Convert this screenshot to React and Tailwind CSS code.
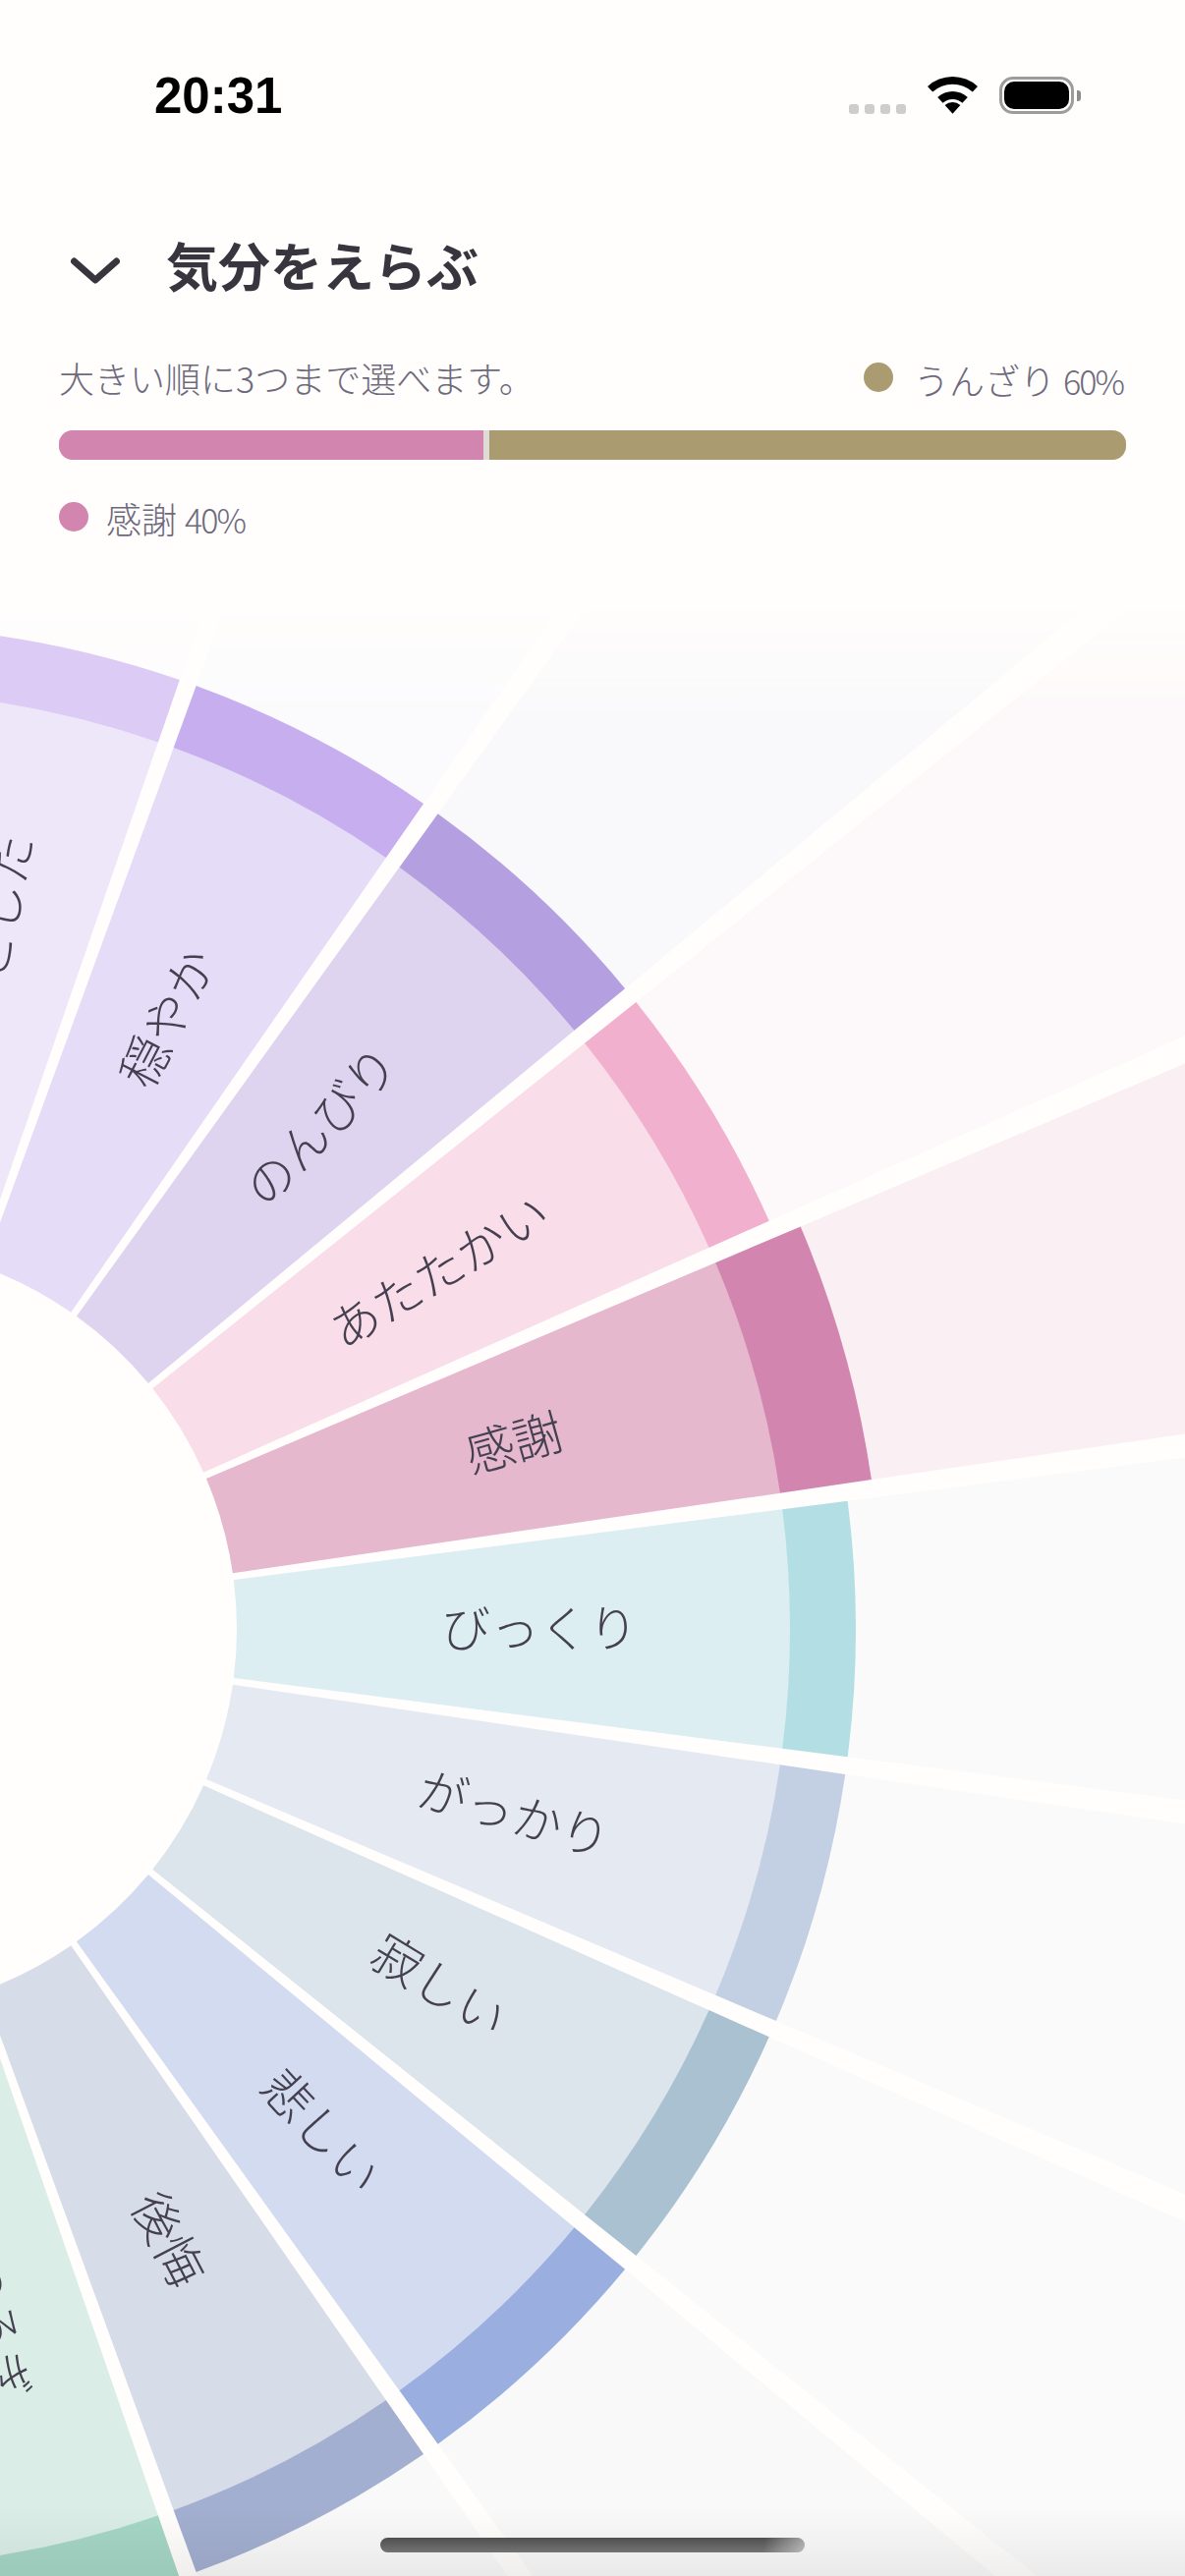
const CX = -151;
const CY = 1658;
const STEP = 360 / 23;
const PAD = 0.5;

const MOODS = [
  { label: 'びっくり', i: 0, fill: '#dceef2', band: '#b2dee4', ray: '#fafafa' },
  { label: '感謝', i: 1, fill: '#e5b8cd', band: '#d285ae', ray: '#faf0f3', selected: true },
  { label: 'あたたかい', i: 2, fill: '#f9dde9', band: '#f2b0cf', ray: '#fdf8f9' },
  { label: 'のんびり', i: 3, fill: '#ded4ef', band: '#b49fe0', ray: '#f9f8fa' },
  { label: '穏やか', i: 4, fill: '#e5dcf7', band: '#c7afef', ray: '#fbfafc' },
  { label: 'ほっとした', i: 5, fill: '#eee7f9', band: '#dbcbf5', ray: '#fcfbfd' },
  { label: 'がっかり', i: -1, fill: '#e4e9f2', band: '#c3d0e4', ray: '#fafafa' },
  { label: '寂しい', i: -2, fill: '#dce5ec', band: '#a9c1d1', ray: '#fafafa' },
  { label: '悲しい', i: -3, fill: '#d2dbef', band: '#9aafdf', ray: '#f9f9f9' },
  { label: '後悔', i: -4, fill: '#d7dce9', band: '#a3afd0', ray: '#f9f9f9' },
  { label: 'くつろぎ', i: -5, fill: '#daede7', band: '#a5d6c6', ray: '#f9f9f9' },
];

function pt(r, deg) {
  const a = (deg * Math.PI) / 180;
  return [CX + r * Math.cos(a), CY - r * Math.sin(a)];
}

function wedge(r0, r1, a0, a1) {
  const [x0, y0] = pt(r0, a0);
  const [x1, y1] = pt(r1, a0);
  const [x2, y2] = pt(r1, a1);
  const [x3, y3] = pt(r0, a1);
  return `M${x0} ${y0}L${x1} ${y1}A${r1} ${r1} 0 0 0 ${x2} ${y2}L${x3} ${y3}A${r0} ${r0} 0 0 1 ${x0} ${y0}Z`;
}

function Wheel() {
  return (
    <svg className="block w-[1206px] h-[2022px]" viewBox="0 600 1206 2022">
      <defs>
        <linearGradient id="rayFade" gradientUnits="userSpaceOnUse" x1="0" y1="612" x2="0" y2="735">
          <stop offset="0" stopColor="#000" />
          <stop offset="1" stopColor="#fff" />
        </linearGradient>
        <mask id="rayMask" maskUnits="userSpaceOnUse" x="0" y="600" width="1206" height="2022">
          <rect x="0" y="600" width="1206" height="2022" fill="url(#rayFade)" />
        </mask>
      </defs>
      <g mask="url(#rayMask)">
        {MOODS.map(m => {
          const mid = m.i * STEP;
          return <path key={m.label} d={wedge(m.selected ? 1049 : 1022, 2400, mid - STEP / 2 + PAD, mid + STEP / 2 - PAD)} fill={m.ray} />;
        })}
      </g>
      {MOODS.map(m => {
        const mid = m.i * STEP;
        const a0 = mid - STEP / 2 + PAD;
        const a1 = mid + STEP / 2 - PAD;
        const [tx, ty] = pt(700, mid);
        return (
          <g key={m.label}>
            <path d={wedge(392, 955.5, a0, a1)} fill={m.fill} />
            <path d={wedge(955, m.selected ? 1049 : 1022, a0, a1)} fill={m.band} />
            {/* label sits a little above the wedge's centre line */}
            <text
              x={tx}
              y={ty - 4}
              transform={`rotate(${-mid} ${tx} ${ty})`}
              textAnchor="middle"
              dominantBaseline="central"
              fill="#454050"
              className="text-[50px] font-light font-['Noto_Sans_CJK_JP',sans-serif]"
            >
              {m.label}
            </text>
          </g>
        );
      })}
    </svg>
  );
}

function WifiIcon() {
  const arc = (r0, r1) => {
    const t = (42.5 * Math.PI) / 180;
    const c = 37.7;
    const s = Math.sin(t);
    const k = Math.cos(t);
    return `M${25.5 - r1 * s} ${c - r1 * k}A${r1} ${r1} 0 0 1 ${25.5 + r1 * s} ${c - r1 * k}L${25.5 + r0 * s} ${c - r0 * k}A${r0} ${r0} 0 0 0 ${25.5 - r0 * s} ${c - r0 * k}Z`;
  };
  return (
    <svg className="w-[51px] h-[38px]" viewBox="0 0 51 38" fill="#000">
      <path d={arc(30, 37.7)} />
      <path d={arc(14.7, 22.7)} />
      <path d="M17.6 29.1A11.7 11.7 0 0 1 33.4 29.1L25.5 37.7Z" />
    </svg>
  );
}

function StatusBar() {
  return (
    <div className="flex justify-between h-[216px] pl-[157px] pr-[106px] pt-[78px]">
      <div className="h-[40px] leading-[40px] text-[51px] font-bold text-black font-['Liberation_Sans',sans-serif]">20:31</div>
      <div className="flex items-start h-[38px]">
        <div className="flex gap-[6px] mt-[28px] mr-[22px]">
          <span className="w-[10px] h-[10px] rounded-[3px] bg-[#cdcdcd]" />
          <span className="w-[10px] h-[10px] rounded-[3px] bg-[#cdcdcd]" />
          <span className="w-[10px] h-[10px] rounded-[3px] bg-[#cdcdcd]" />
          <span className="w-[10px] h-[10px] rounded-[3px] bg-[#cdcdcd]" />
        </div>
        <WifiIcon />
        <div className="ml-[22px] w-[76px] h-[38px] rounded-[14px] border-[3px] border-[#9c9c9c] p-[2px]">
          <div className="w-full h-full rounded-[10px] bg-black" />
        </div>
        <div className="ml-[3px] mt-[14px] w-[4px] h-[11px] rounded-r-[3px] bg-[#8c8c8c]" />
      </div>
    </div>
  );
}

function Legend({ color, label, pct, className }) {
  return (
    <div className={`flex items-center ${className}`}>
      <span className="w-[30px] h-[30px] rounded-full" style={{ background: color }} />
      <span className="pt-[5px] text-[36px] leading-[40px] font-light text-[#6e6a7c]">
        {label}
        <span className="ml-[8px] text-[34px] tracking-[-2px]">{pct}</span>
      </span>
    </div>
  );
}

export default function App() {
  return (
    <div className="relative w-[1206px] h-[2622px] overflow-hidden bg-[#fffefd] font-['Noto_Sans_CJK_JP',sans-serif]">
      <div className="h-[600px]">
        <StatusBar />
        <div className="flex items-center h-[106px] pl-[72px]">
          <svg className="w-[50px] h-[27px] mt-[12px]" viewBox="0 0 50 27" fill="none" stroke="#39353f" strokeWidth="7" strokeLinecap="round" strokeLinejoin="round">
            <path d="M3.5 4L25 23L46.5 4" />
          </svg>
          <h1 className="ml-[47px] text-[53px] leading-[70px] font-bold text-[#39353f]">気分をえらぶ</h1>
        </div>
        <div className="flex items-center justify-between h-[40px] mt-[42px] pl-[60px] pr-[63px]">
          <span className="text-[36px] leading-[40px] font-light text-[#6e6a7c]">大きい順に3つまで選べます。</span>
          <Legend color="#ab9b70" label="うんざり" pct="60%" className="gap-[21px]" />
        </div>
        <div className="flex h-[30px] mt-[34px] mx-[60px] rounded-[14px] overflow-hidden bg-[#dedbd6]">
          <div className="h-full bg-[#d285ae]" style={{ width: '432px' }} />
          <div className="h-full ml-[6px] flex-1 bg-[#ab9b70]" />
        </div>
        <Legend color="#d285ae" label="感謝" pct="40%" className="gap-[18px] mt-[34px] px-[60px]" />
      </div>
      <Wheel />
      <div className="absolute left-0 right-0 bottom-0 h-[70px] bg-gradient-to-b from-transparent to-[#00000010]" />
      <div className="absolute left-[387px] top-[2583px] w-[432px] h-[15px] rounded-[8px] bg-[linear-gradient(100deg,transparent_90%,rgba(255,255,255,0.5)),linear-gradient(to_bottom,#4f4f4f,#737373)]" />
    </div>
  );
}
